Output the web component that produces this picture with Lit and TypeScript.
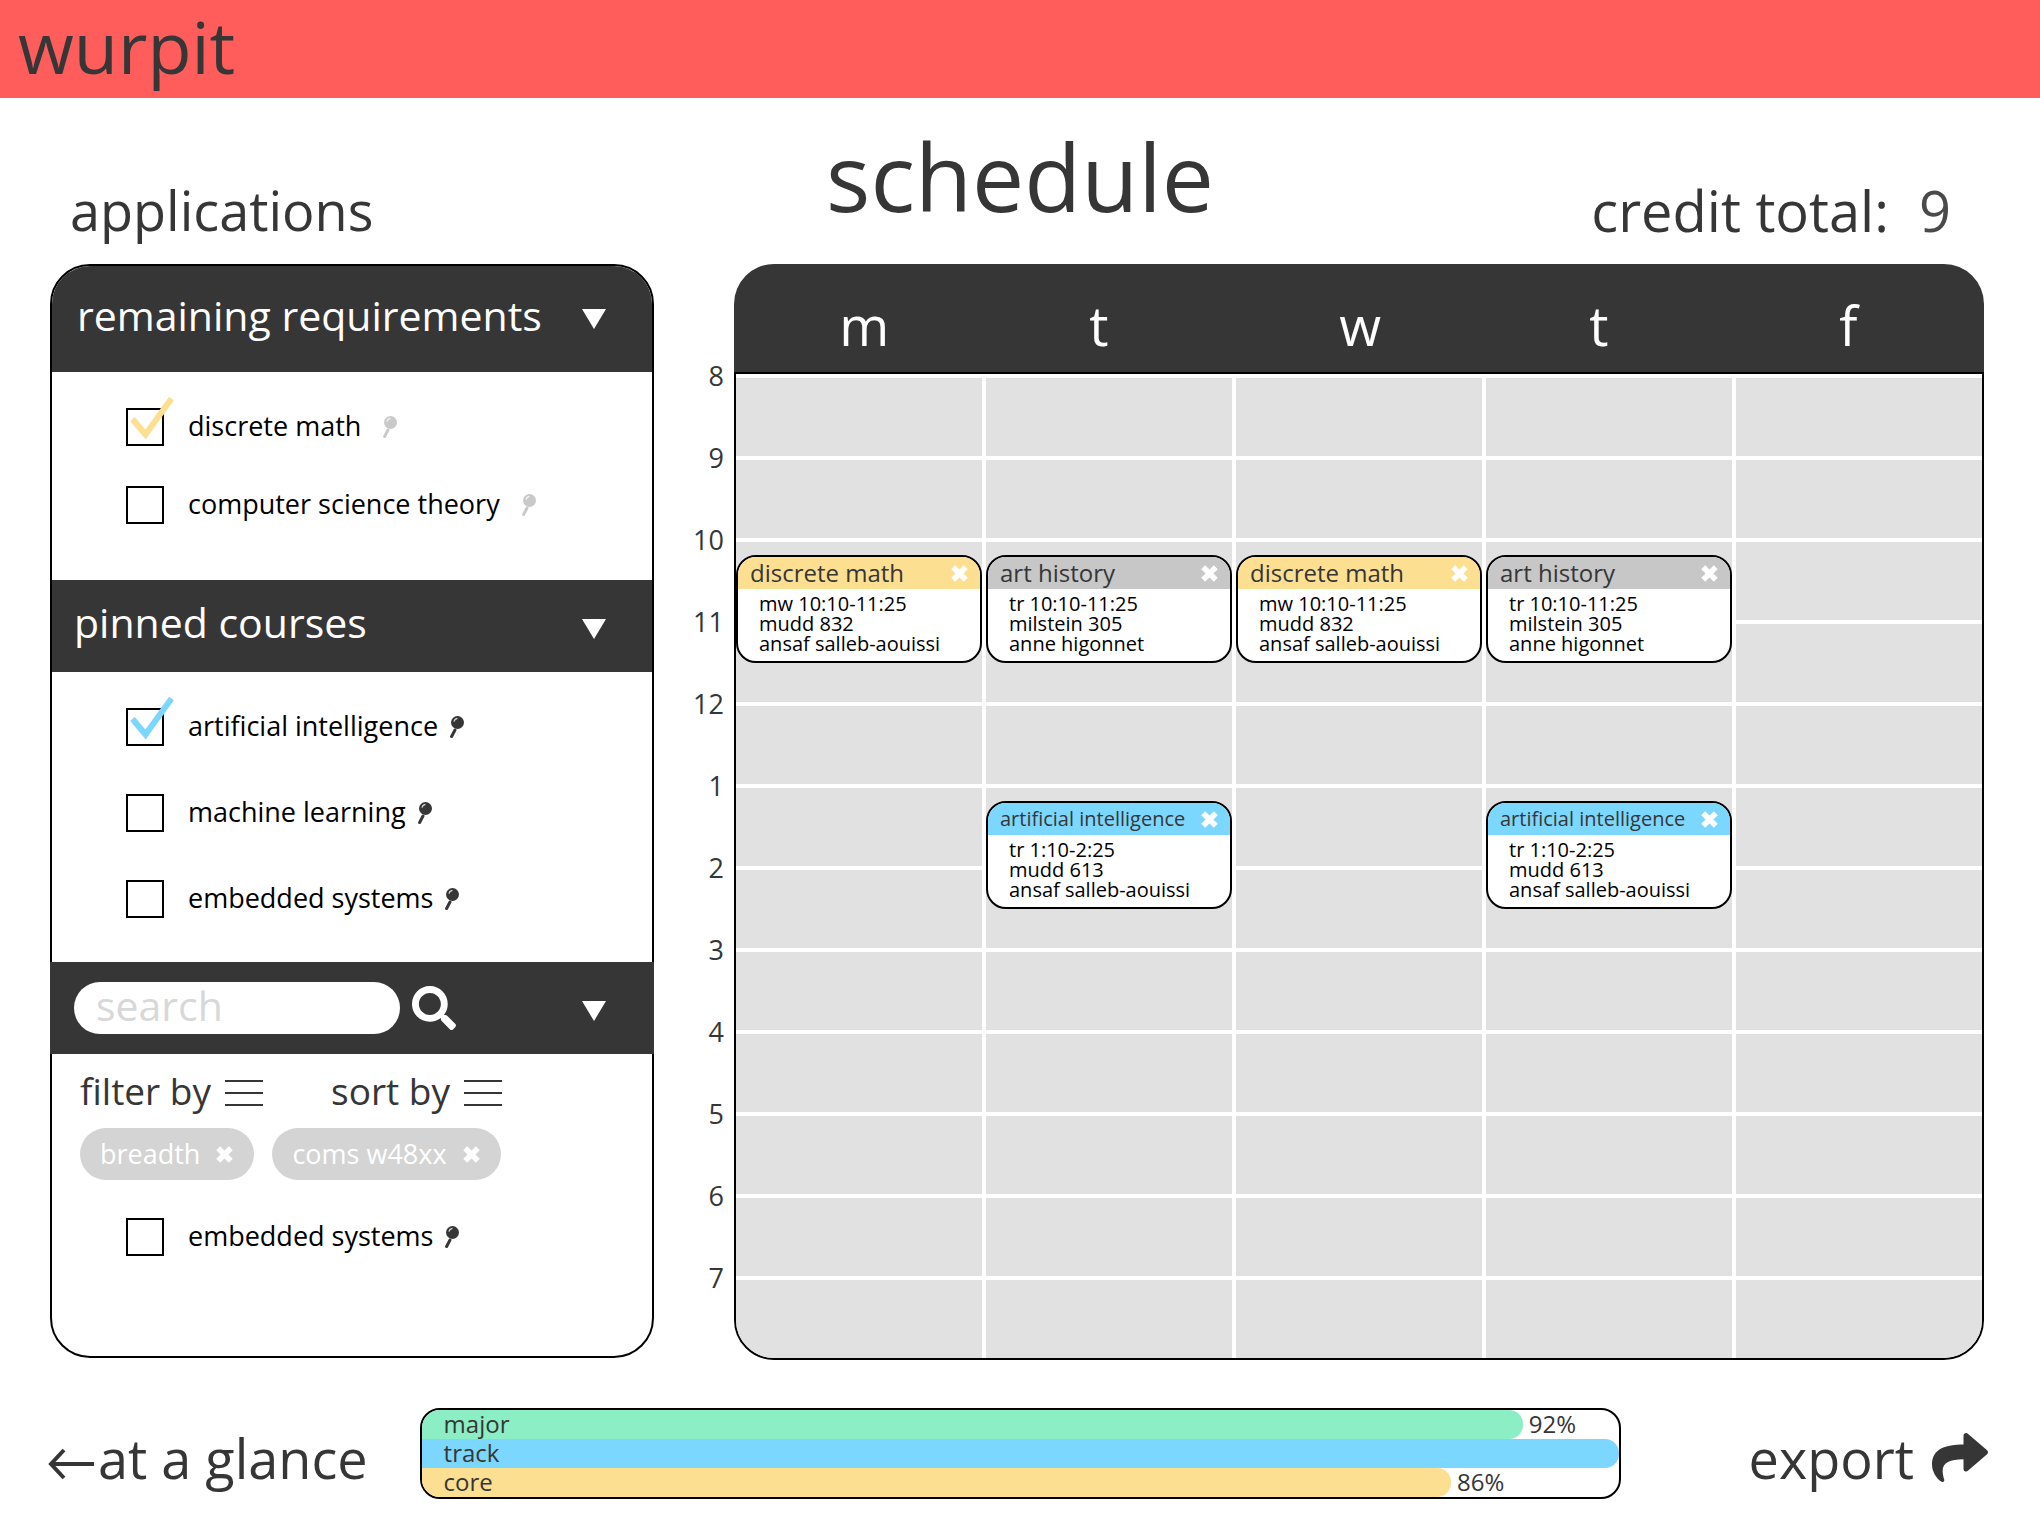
import { LitElement, html, css, svg } from "lit";
import { customElement } from "lit/decorators.js";
import { styleMap } from "lit/directives/style-map.js";

interface Course {
  id: string;
  name: string;
  tick?: string;
}

interface Meeting {
  day: number;
  row: number;
  title: string;
  color: string;
  small?: boolean;
  lines: string[];
}

const YELLOW = "#fddf92";
const BLUE = "#7cd7ff";
const GREEN = "#8beec5";
const GREY = "#c7c7c7";

const REQUIREMENTS: Course[] = [
  { id: "req-dm", name: "discrete math", tick: YELLOW },
  { id: "req-cst", name: "computer science theory" },
];

const PINNED: Course[] = [
  { id: "pin-ai", name: "artificial intelligence", tick: BLUE },
  { id: "pin-ml", name: "machine learning" },
  { id: "pin-es", name: "embedded systems" },
];

const RESULTS: Course[] = [{ id: "res-es", name: "embedded systems" }];

const HOURS = [8, 9, 10, 11, 12, 1, 2, 3, 4, 5, 6, 7];
const DAYS = ["m", "t", "w", "t", "f"];

const discrete = {
  row: 3,
  title: "discrete math",
  color: YELLOW,
  lines: ["mw 10:10-11:25", "mudd 832", "ansaf salleb-aouissi"],
};
const art = {
  row: 3,
  title: "art history",
  color: GREY,
  lines: ["tr 10:10-11:25", "milstein 305", "anne higonnet"],
};
const ai = {
  row: 6,
  title: "artificial intelligence",
  color: BLUE,
  small: true,
  lines: ["tr 1:10-2:25", "mudd 613", "ansaf salleb-aouissi"],
};

const MEETINGS: Meeting[] = [
  { day: 1, ...discrete },
  { day: 2, ...art },
  { day: 3, ...discrete },
  { day: 4, ...art },
  { day: 2, ...ai },
  { day: 4, ...ai },
];

const PROGRESS = [
  { name: "major", value: 92, color: GREEN },
  { name: "track", value: 100, color: BLUE },
  { name: "core", value: 86, color: YELLOW },
];

const closeIcon = svg`<svg class="close-icon" viewBox="0 0 17 17" aria-hidden="true">
  <path d="M2.200 2.200 14.800 14.800M14.800 2.200 2.200 14.800" fill="none" stroke="currentColor" stroke-width="5.500" />
</svg>`;

const menuIcon = svg`<svg class="menu-icon" viewBox="0 0 38 26" aria-hidden="true">
  <path d="M0 1H38M0 13H38M0 25H38" fill="none" stroke="currentColor" stroke-width="2" />
</svg>`;

const pinIcon = svg`<svg class="pin-icon" viewBox="0 0 14 22" aria-hidden="true">
  <circle cx="7.500" cy="6.500" r="6.500" fill="currentColor" />
  <path d="M5 14 1.600 20.500" fill="none" stroke="currentColor" stroke-width="3" stroke-linecap="round" />
  <path d="M4 5.700Q4.400 3 7.400 2.400" fill="none" stroke="#fff" stroke-width="1.200" opacity=".8" />
</svg>`;

@customElement("app-root")
export class AppRoot extends LitElement {
  static styles = css`
    :host {
      display: block;
      min-height: 100vh;
      background: #fff;
      color: #363636;
      font-family: "Open Sans", "Noto Sans", sans-serif;
    }
    * {
      box-sizing: border-box;
    }
    svg {
      display: block;
      flex: none;
    }
    h1, h2, h3, p, ul {
      margin: 0;
      padding: 0;
      font-weight: 400;
      list-style: none;
    }
    button {
      margin: 0;
      padding: 0;
      border: 0;
      background: none;
      color: inherit;
      font: inherit;
      cursor: pointer;
    }
    a {
      color: inherit;
      text-decoration: none;
    }
    .brand-bar {
      background: #ff5c5c;
      padding: 0 18px 6px;
      font-size: 72px;
      line-height: 92px;
    }
    .titles {
      display: grid;
      grid-template-columns: 1fr auto 1fr;
      min-height: 166px;
      padding: 0 70px;
    }
    .page-title {
      padding-top: 31px;
      font-size: 93px;
      line-height: 94px;
    }
    .side-title {
      align-self: end;
      padding-bottom: 24px;
      font-size: 54px;
      line-height: 60px;
    }
    .credits {
      display: flex;
      justify-content: flex-end;
      gap: 30px;
      padding-right: 19px;
      font-size: 56px;
    }
    .credit-value {
      color: #4a4a4a;
    }
    .main {
      display: grid;
      grid-template-columns: minmax(0, 604fr) 80px minmax(0, 1250fr);
      padding: 0 56px 0 50px;
    }

    /* course panel */
    .panel {
      display: flex;
      flex-direction: column;
      margin-bottom: 2px;
      border: 2px solid #000;
      border-radius: 40px;
    }
    .section-head {
      display: flex;
      align-items: center;
      justify-content: space-between;
      min-height: 92px;
      padding: 0 46px 0 22px;
      background: #363636;
      color: #fff;
    }
    .section-head.first {
      min-height: 106px;
      padding-left: 25px;
      border-radius: 38px 38px 0 0;
    }
    .section-head.search {
      margin: 0 -2px;
      padding: 0 48px 0 24px;
    }
    .section-title {
      padding-bottom: 8px;
      font-size: 41px;
      line-height: 56px;
    }
    .toggle {
      padding-top: 6px;
    }
    .first .toggle {
      padding-top: 0;
    }
    .toggle svg {
      width: 24px;
      height: 20px;
    }
    .search-form {
      display: flex;
      align-items: center;
      gap: 12px;
    }
    .search-box {
      width: 326px;
      height: 52px;
      padding: 0 22px 6px;
      border: 0;
      border-radius: 26px;
      background: #fff;
      color: #363636;
      font: inherit;
      font-size: 41px;
    }
    .search-box::placeholder {
      color: #d8d8d8;
      opacity: 1;
    }
    .search-form svg {
      width: 44px;
      height: 44px;
    }
    .courses {
      display: flex;
      flex-direction: column;
      gap: 48px;
      padding: 36px 20px 44px 74px;
    }
    .courses.required {
      gap: 40px;
      padding-bottom: 56px;
    }
    .courses.results {
      padding-top: 38px;
    }
    .course {
      display: flex;
      align-items: center;
      height: 38px;
      color: #000;
      font-size: 27px;
      line-height: 36px;
    }
    .tick-holder {
      position: relative;
      display: block;
      width: 38px;
      height: 38px;
    }
    .tick-box {
      display: block;
      appearance: none;
      width: 38px;
      height: 38px;
      margin: 0;
      border: 2px solid #000;
      background: #fff;
    }
    .tick-mark {
      position: absolute;
      left: 2px;
      top: -12px;
      width: 46px;
      height: 44px;
      pointer-events: none;
    }
    .course-name {
      padding: 0 12px 2px 24px;
    }
    .required .course-name {
      padding-right: 22px;
    }
    .pin {
      color: #363636;
    }
    .required .pin {
      color: #c9c9c9;
    }
    .pin-icon {
      width: 14px;
      height: 22px;
    }
    .refine {
      display: flex;
      gap: 68px;
      padding: 12px 28px;
      font-size: 37px;
      line-height: 50px;
    }
    .refine button {
      display: flex;
      align-items: center;
      gap: 14px;
    }
    .menu-icon {
      width: 38px;
      height: 26px;
      margin-top: 4px;
    }
    .chips {
      display: flex;
      gap: 18px;
      padding: 0 28px;
    }
    .chip {
      display: flex;
      align-items: center;
      gap: 16px;
      height: 52px;
      padding: 0 21px 0 20px;
      border-radius: 26px;
      background: #d4d4d4;
      color: #fff;
      font-size: 27px;
    }
    .close-icon {
      width: 17px;
      height: 17px;
      color: #fff;
    }
    .chip-text {
      padding-bottom: 2px;
    }

    /* weekly calendar */
    .hours {
      padding: 71px 10px 0 0;
      text-align: right;
      font-size: 27px;
      line-height: 82px;
    }
    .days {
      display: grid;
      grid-template-columns: repeat(5, minmax(0, 1fr));
      gap: 4px;
      height: 108px;
      padding: 15px 2px 0;
      border-radius: 40px 40px 0 0;
      background: #363636;
      color: #fff;
      font-size: 54px;
      line-height: 93px;
    }
    .day {
      padding-left: 42%;
    }
    .week {
      display: grid;
      grid-template-columns: repeat(5, minmax(0, 1fr));
      grid-template-rows: repeat(12, 82px);
      column-gap: 4px;
      overflow: hidden;
      border: 2px solid #000;
      border-radius: 0 0 40px 40px;
      background: #fff;
    }
    .slot {
      border-top: 4px solid #fff;
      background: #e1e1e1;
    }
    .meeting {
      align-self: start;
      overflow: hidden;
      margin-top: 17px;
      border: 2px solid #000;
      border-radius: 20px;
      background: #fff;
    }
    .meeting-head {
      display: flex;
      align-items: center;
      justify-content: space-between;
      height: 32px;
      padding: 0 12px;
    }
    .meeting-title {
      font-size: 24px;
      line-height: 30px;
      white-space: nowrap;
    }
    .meeting-title.small {
      font-size: 20px;
    }
    .meeting-info {
      padding: 5px 8px 7px 21px;
      color: #000;
      font-size: 20px;
      line-height: 20px;
      white-space: pre;
    }

    /* footer */
    .footer {
      display: grid;
      grid-template-columns: auto minmax(0, 1fr) auto;
      align-items: center;
      column-gap: 52px;
      padding: 48px 52px 24px 48px;
    }
    .nav {
      display: flex;
      align-items: center;
      padding-top: 8px;
      font-size: 54px;
      line-height: 74px;
      white-space: nowrap;
    }
    .back {
      gap: 4px;
    }
    .back svg {
      width: 46px;
      height: 32px;
      margin-top: 12px;
    }
    .export {
      gap: 18px;
    }
    .export svg {
      width: 56px;
      height: 49px;
    }
    .progress {
      overflow: hidden;
      margin-right: 76px;
      border: 2px solid #000;
      border-radius: 20px;
      font-size: 24px;
      line-height: 28px;
    }
    .bar-row {
      display: flex;
      gap: 6px;
      height: 29px;
    }
    .bar {
      padding-left: 22px;
      border-radius: 0 14px 14px 0;
    }
  `;

  private toggle(label: string) {
    return html`<button class="toggle" aria-label=${label}>
      <svg viewBox="0 0 24 20" aria-hidden="true"><path d="M0 0H24L12 20z" fill="currentColor" /></svg>
    </button>`;
  }

  private course(c: Course) {
    return html`<li class="course">
      <span class="tick-holder">
        <input class="tick-box" type="checkbox" id=${c.id} .checked=${!!c.tick} />
        ${c.tick
          ? html`<svg class="tick-mark" viewBox="0 0 46 44" aria-hidden="true">
              <path d="M4.500 23 17.500 38.500 43.500 2.500" fill="none" stroke=${c.tick} stroke-width="6" />
            </svg>`
          : null}
      </span>
      <label class="course-name" for=${c.id}>${c.name}</label>
      <button class="pin" aria-label="pin ${c.name}">${pinIcon}</button>
    </li>`;
  }

  private meeting(m: Meeting) {
    return html`<article
      class="meeting"
      style=${styleMap({ gridColumn: `${m.day}`, gridRow: `${m.row} / span 2` })}
    >
      <div class="meeting-head" style=${styleMap({ background: m.color })}>
        <h3 class="meeting-title ${m.small ? "small" : ""}">${m.title}</h3>
        <button aria-label="remove ${m.title}">${closeIcon}</button>
      </div>
      <p class="meeting-info">${m.lines.join("\n")}</p>
    </article>`;
  }

  render() {
    return html`
      <header class="brand-bar">wurpit</header>
      <div class="titles">
        <h2 class="side-title">applications</h2>
        <h1 class="page-title">schedule</h1>
        <div class="side-title credits">
          <span>credit total:</span><span class="credit-value">9</span>
        </div>
      </div>
      <main class="main">
        <section class="panel">
          <div class="section-head first">
            <h3 class="section-title">remaining requirements</h3>
            ${this.toggle("toggle remaining requirements")}
          </div>
          <ul class="courses required">${REQUIREMENTS.map((c) => this.course(c))}</ul>
          <div class="section-head">
            <h3 class="section-title">pinned courses</h3>
            ${this.toggle("toggle pinned courses")}
          </div>
          <ul class="courses">${PINNED.map((c) => this.course(c))}</ul>
          <div class="section-head search">
            <div class="search-form" role="search">
              <input class="search-box" type="text" placeholder="search" aria-label="search" />
              <button aria-label="run search">
                <svg viewBox="0 0 512 512" aria-hidden="true">
                  <path fill="currentColor" d="M505 442.7L405.3 343c-4.5-4.5-10.6-7-17-7H372c27.6-35.3 44-79.7 44-128C416 93.1 322.9 0 208 0S0 93.1 0 208s93.1 208 208 208c48.3 0 92.7-16.4 128-44v16.3c0 6.4 2.5 12.5 7 17l99.7 99.7c9.4 9.4 24.6 9.4 33.9 0l28.3-28.3c9.4-9.4 9.4-24.6.1-34zM208 336c-70.7 0-128-57.2-128-128 0-70.7 57.2-128 128-128 70.7 0 128 57.2 128 128 0 70.7-57.2 128-128 128z" />
                </svg>
              </button>
            </div>
            ${this.toggle("toggle search results")}
          </div>
          <div class="refine">
            <button>filter by ${menuIcon}</button>
            <button>sort by ${menuIcon}</button>
          </div>
          <div class="chips">
            ${["breadth", "coms w48xx"].map(
              (f) => html`<span class="chip"><span class="chip-text">${f}</span>
                <button aria-label="remove ${f}">${closeIcon}</button></span>`
            )}
          </div>
          <ul class="courses results">${RESULTS.map((c) => this.course(c))}</ul>
        </section>
        <div class="hours">${HOURS.map((h) => html`<div>${h}</div>`)}</div>
        <section>
          <div class="days">${DAYS.map((d) => html`<div class="day">${d}</div>`)}</div>
          <div class="week">
            ${HOURS.map((_, r) =>
              DAYS.map(
                (_d, c) => html`<div
                  class="slot"
                  style=${styleMap({ gridColumn: `${c + 1}`, gridRow: `${r + 1}` })}
                ></div>`
              )
            )}
            ${MEETINGS.map((m) => this.meeting(m))}
          </div>
        </section>
      </main>
      <footer class="footer">
        <a class="nav back" href="#glance">
          <svg viewBox="0 0 46 32" aria-hidden="true">
            <path d="M46 16H3M16 2 3 16 16 30" fill="none" stroke="currentColor" stroke-width="4" />
          </svg>
          <span>at a glance</span>
        </a>
        <div class="progress">
          ${PROGRESS.map(
            (p) => html`<div class="bar-row">
              <div class="bar" style=${styleMap({ width: `${p.value}%`, background: p.color })}>${p.name}</div>
              ${p.value < 100 ? html`<span>${p.value}%</span>` : null}
            </div>`
          )}
        </div>
        <a class="nav export" href="#export">
          <span>export</span>
          <svg viewBox="0 32 512 448" aria-hidden="true">
            <path fill="currentColor" d="M503.691 189.836L327.687 37.851C312.281 24.546 288 35.347 288 56.015v80.053C127.371 137.907 0 170.1 0 322.326c0 61.441 39.581 122.309 83.333 154.132 13.653 9.931 33.111-2.533 28.077-18.631C66.066 312.814 132.917 274.316 288 272.085V360c0 20.7 24.3 31.453 39.687 18.164l176.004-152c11.071-9.562 11.086-26.753 0-36.328z" />
          </svg>
        </a>
      </footer>
    `;
  }
}
